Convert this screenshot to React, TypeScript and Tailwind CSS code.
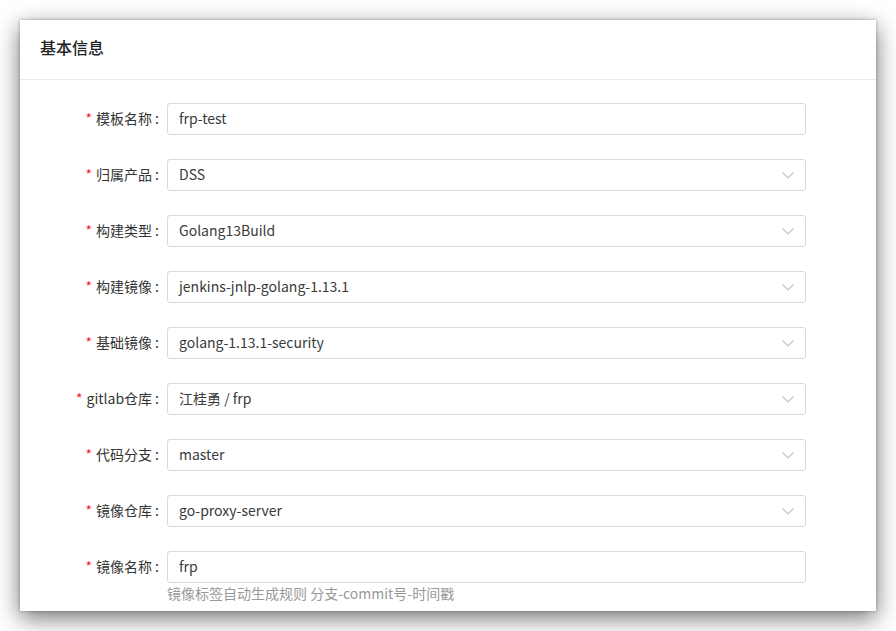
import React from 'react';

type Field = {
  label: string;
  value: string;
  select?: boolean;
  help?: string;
};

const fields: Field[] = [
  { label: '模板名称', value: 'frp-test' },
  { label: '归属产品', value: 'DSS', select: true },
  { label: '构建类型', value: 'Golang13Build', select: true },
  { label: '构建镜像', value: 'jenkins-jnlp-golang-1.13.1', select: true },
  { label: '基础镜像', value: 'golang-1.13.1-security', select: true },
  { label: 'gitlab仓库', value: '江桂勇 / frp', select: true },
  { label: '代码分支', value: 'master', select: true },
  { label: '镜像仓库', value: 'go-proxy-server', select: true },
  { label: '镜像名称', value: 'frp', help: '镜像标签自动生成规则 分支-commit号-时间戳' },
];

const Chevron: React.FC = () => (
  <svg width="12" height="7" viewBox="0 0 12 7" fill="none" className="shrink-0 mt-[2px]">
    <path d="M0.5 0.5 L6 6 L11.5 0.5" stroke="#bfbfbf" strokeWidth="1.1" />
  </svg>
);

const FormRow: React.FC<{ field: Field }> = ({ field }) => (
  <div className="flex items-start">
    <div className="w-[147px] h-8 shrink-0 flex items-center justify-end pr-[8px] pb-[2px] text-sm text-[#333]">
      <span className="text-[#f5222d] mr-[4px] text-[14px]">*</span>
      <span>{field.label}</span>
      <span className="ml-[3px]">:</span>
    </div>
    <div className="w-[639px]">
      <div className="h-8 border border-[#d9d9d9] rounded-[3px] bg-white flex items-center justify-between pl-[11px] pr-[11px] pb-[2px] text-sm text-[#3a3a3a]">
        <span>{field.value}</span>
        {field.select && <Chevron />}
      </div>
      {field.help && <div className="text-sm leading-5 text-[#999]">{field.help}</div>}
    </div>
  </div>
);

export default function App() {
  return (
    <div
      className="w-[896px] h-[631px] bg-white pt-5 px-5"
      style={{ fontFamily: '"Noto Sans CJK SC", "Noto Sans", sans-serif' }}
    >
      <div className="w-[856px] h-[591px] bg-white shadow-[0_7px_22px_rgba(0,0,0,0.55),0_0_3px_rgba(0,0,0,0.3)]">
        <div className="h-[60px] px-5 pb-[5px] flex items-center border-b border-[#ebebeb]">
          <h2 className="text-base font-medium text-[#222]">基本信息</h2>
        </div>
        <div className="pt-[23px] flex flex-col gap-6">
          {fields.map((f) => (
            <FormRow key={f.label} field={f} />
          ))}
        </div>
      </div>
    </div>
  );
}
